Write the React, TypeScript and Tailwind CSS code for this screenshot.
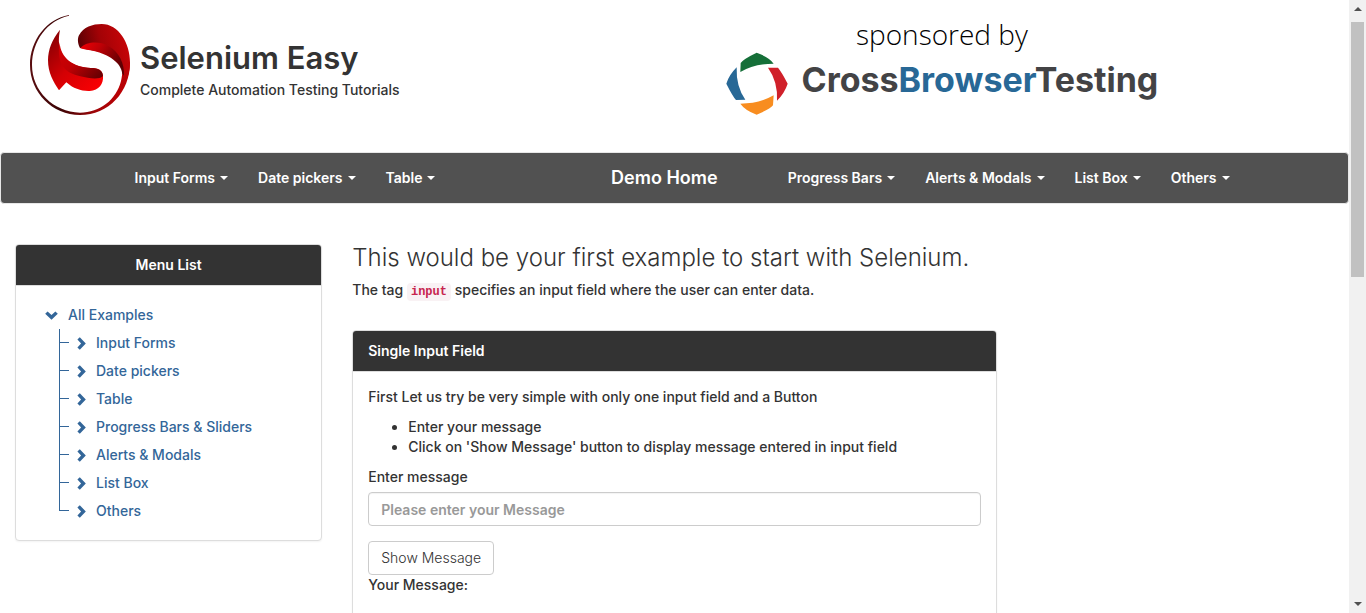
import React from "react";

const sans = "font-['Inter','Liberation_Sans',sans-serif]";

const leftLinks = ["Input Forms", "Date pickers", "Table"];
const rightLinks = ["Progress Bars", "Alerts & Modals", "List Box", "Others"];
const treeItems = [
  "Input Forms",
  "Date pickers",
  "Table",
  "Progress Bars & Sliders",
  "Alerts & Modals",
  "List Box",
  "Others",
];

function SeleniumLogo() {
  return (
    <svg viewBox="30 30 300 300" className="size-[100px] shrink-0" aria-hidden="true">
      <defs>
        <linearGradient id="ring" x1="0" y1="0.4" x2="1" y2="0.4">
          <stop offset="0" stopColor="#5a0d10" />
          <stop offset="0.3" stopColor="#3a0405" />
          <stop offset="0.65" stopColor="#a00508" />
          <stop offset="1" stopColor="#c40003" />
        </linearGradient>
        <linearGradient id="cap" x1="0" y1="0.6" x2="1" y2="0.3">
          <stop offset="0" stopColor="#4c0003" />
          <stop offset="0.5" stopColor="#a30206" />
          <stop offset="1" stopColor="#c90508" />
        </linearGradient>
        <linearGradient id="fold" x1="0" y1="0" x2="1" y2="0.5">
          <stop offset="0" stopColor="#f00005" />
          <stop offset="0.4" stopColor="#c00006" />
          <stop offset="1" stopColor="#5e0003" />
        </linearGradient>
        <linearGradient id="wing" x1="0" y1="0" x2="1" y2="1">
          <stop offset="0" stopColor="#7b0004" />
          <stop offset="0.5" stopColor="#d40004" />
          <stop offset="1" stopColor="#ff0003" />
        </linearGradient>
        <linearGradient id="wingShade" x1="0" y1="0" x2="1" y2="0.8">
          <stop offset="0" stopColor="#d30004" />
          <stop offset="0.5" stopColor="#c00004" />
          <stop offset="1" stopColor="#6b0003" />
        </linearGradient>
      </defs>
      <path
        fill="url(#ring)"
        d="M147 30C80 42 30 105 30 180C30 262 97 330 180 330C266 330 330 262 330 172L300 160C308 185 309 205 303 228C289 284 240 323 180 323C100 321 36 258 36 180C36 108 82 46 147 32Z"
      />
      <path
        fill="url(#cap)"
        d="M180 129C173 116 172 100 177 91C190 66 218 57 245 57C296 57 330 115 330 172C330 200 322 232 303 252C322 196 300 160 262 145Z"
      />
      <path
        fill="url(#fold)"
        d="M181 129C200 109 238 108 264 122C298 140 314 175 312 212L307 206C303 172 266 149 222 138C207 135 192 134 181 129Z"
      />
      <path
        fill="url(#wing)"
        d="M120 74C96 104 84 134 84 165C84 204 100 230 117 256L139 232C160 251 185 259 209 258C237 256 251 236 249 212C247 193 232 189 212 189C168 187 137 170 124 141C114 119 116 96 120 74Z"
      />
      <path
        fill="url(#wingShade)"
        d="M119 112C121 160 162 188 212 189C234 189 248 196 249 213C236 226 205 219 181 214C136 205 108 177 119 112Z"
      />
    </svg>
  );
}

function SponsorMark() {
  return (
    <svg viewBox="76 157 186 189" className="h-[63px] w-[62px] shrink-0" aria-hidden="true">
      <path fill="#156f38" d="M168 159Q208 174 219 192Q160 192 119 217L120 190Q128 178 168 159Z" />
      <path fill="#286896" d="M108 203Q106 262 134 300L106 301Q96 290 77 252Q85 226 108 203Z" />
      <path fill="#d0202a" d="M202 204L232 204Q243 217 261 252Q252 280 229 303Q232 246 202 204Z" />
      <path fill="#f88d20" d="M119 312Q176 312 219 287L217 317Q209 328 168 345Q133 332 119 312Z" />
    </svg>
  );
}

function NavItem({ label }: { label: string }) {
  return (
    <li>
      <a href="#" className="flex items-center gap-[5px] px-[15px] py-[15px] text-sm leading-5 font-semibold">
        {label}
        <span className="border-x-4 border-t-4 border-x-transparent border-t-white" />
      </a>
    </li>
  );
}

function Panel({ title, center, children }: { title: string; center?: boolean; children: React.ReactNode }) {
  return (
    <section className="rounded border border-[#ddd] bg-white shadow-xs">
      <h4
        className={
          "rounded-t-[3px] border-b border-[#ddd] bg-[#333] px-[15px] py-2.5 text-sm leading-5 font-semibold text-white" +
          (center ? " text-center" : "")
        }
      >
        {title}
      </h4>
      <div className="p-[15px]">{children}</div>
    </section>
  );
}

function Tree() {
  return (
    <div className="pl-3.5 text-[#336699]">
      <a href="#" className="flex h-7 items-center gap-2.5">
        <svg viewBox="0 0 13 9" className="h-[9px] w-[13px]" fill="currentColor" aria-hidden="true">
          <path d="M0.2 2.8L2.6 0.4L6.5 4.1L10.4 0.4L12.8 2.8L6.5 8.8Z" />
        </svg>
        All Examples
      </a>
      <ul className="pl-3.5">
        {treeItems.map((item, i) => (
          <li key={item} className="flex h-7 items-center">
            <span className="grid w-2.5 grid-rows-2 self-stretch">
              <span className="border-b border-l border-[#336699]" />
              {i < treeItems.length - 1 && <span className="border-l border-[#336699]" />}
            </span>
            <a href="#" className="flex items-center gap-2.5 pl-2">
              <svg viewBox="0 0 9 13" className="h-[13px] w-[9px]" fill="currentColor" aria-hidden="true">
                <path d="M2.8 0.2L0.4 2.6L4.1 6.5L0.4 10.4L2.8 12.8L8.8 6.5Z" />
              </svg>
              {item}
            </a>
          </li>
        ))}
      </ul>
    </div>
  );
}

function ScrollRail() {
  return (
    <div className="flex w-[17px] shrink-0 flex-col items-center bg-[#f1f1f1]" aria-hidden="true">
      <div className="flex h-[22px] items-center pb-1">
        <span className="border-x-4 border-b-4 border-x-transparent border-b-[#505050]" />
      </div>
      <div className="h-[255px] w-[13px] bg-[#c1c1c1]" />
      <div className="mt-auto flex h-[18px] items-center">
        <span className="border-x-4 border-t-4 border-x-transparent border-t-[#505050]" />
      </div>
    </div>
  );
}

export default function App() {
  return (
    <div className={"flex h-screen overflow-hidden bg-white text-sm leading-5 font-medium text-[#333] " + sans}>
      <div className="min-w-0 flex-1 overflow-hidden">
        <header className="grid h-[152px] grid-cols-2 items-start">
          <a href="#" className="flex gap-2.5 pt-[15px] pl-[30px]">
            <SeleniumLogo />
            <div className="pt-[25px]">
              <h1 className="text-[31px] leading-9 font-semibold">Selenium Easy</h1>
              <p className="pt-1">Complete Automation Testing Tutorials</p>
            </div>
          </a>
          <a href="#" className="flex w-fit flex-col items-center pt-4 pl-[51px]">
            <span className="font-['Open_Sans',sans-serif] text-[28px] leading-9 font-light text-black">
              sponsored by
            </span>
            <span className="flex items-start gap-3.5">
              <SponsorMark />
              <span className="pt-2 text-[34px] leading-10 font-bold text-[#434345]">
                Cross<span className="text-[#286896]">Browser</span>Testing
              </span>
            </span>
          </a>
        </header>

        <nav className="rounded border border-[#e7e7e7] bg-[#515151] text-white">
          <div className="mx-auto flex max-w-[1170px] items-center pr-[15px] pl-[30px]">
            <ul className="flex">
              {leftLinks.map((l) => (
                <NavItem key={l} label={l} />
              ))}
            </ul>
            <a href="#" className="mr-10 ml-auto px-[15px] text-lg leading-5 font-semibold">
              Demo Home
            </a>
            <ul className="flex">
              {rightLinks.map((l) => (
                <NavItem key={l} label={l} />
              ))}
            </ul>
          </div>
        </nav>

        <div className="grid grid-cols-4 items-start pt-10">
          <aside className="px-[15px]">
            <Panel title="Menu List" center>
              <Tree />
            </Panel>
          </aside>
          <main className="col-span-2 px-[15px]">
            <h2 className="text-2xl leading-7 font-light">This would be your first example to start with Selenium.</h2>
            <p className="pt-2 pb-[30px]">
              The tag{" "}
              <code className="rounded bg-[#f9f2f4] px-1 py-0.5 font-['Liberation_Mono',monospace] text-xs font-bold text-[#c7254e]">
                input
              </code>{" "}
              specifies an input field where the user can enter data.
            </p>
            <Panel title="Single Input Field">
              <p>First Let us try be very simple with only one input field and a Button</p>
              <ul className="my-2.5 list-disc pl-10">
                <li>Enter your message</li>
                <li>Click on 'Show Message' button to display message entered in input field</li>
              </ul>
              <form onSubmit={(e) => e.preventDefault()}>
                <label htmlFor="user-message" className="block pb-[5px]">
                  Enter message
                </label>
                <input
                  id="user-message"
                  type="text"
                  placeholder="Please enter your Message"
                  className="mb-[15px] block h-[34px] w-full rounded border border-[#ccc] px-3 font-semibold inset-shadow-xs placeholder:text-[#999]"
                />
                <button type="submit" className="block h-[34px] rounded border border-[#ccc] px-3 font-light">
                  Show Message
                </button>
              </form>
              <p>Your Message:</p>
              <div className="h-10" />
            </Panel>
          </main>
        </div>
      </div>
      <ScrollRail />
    </div>
  );
}
